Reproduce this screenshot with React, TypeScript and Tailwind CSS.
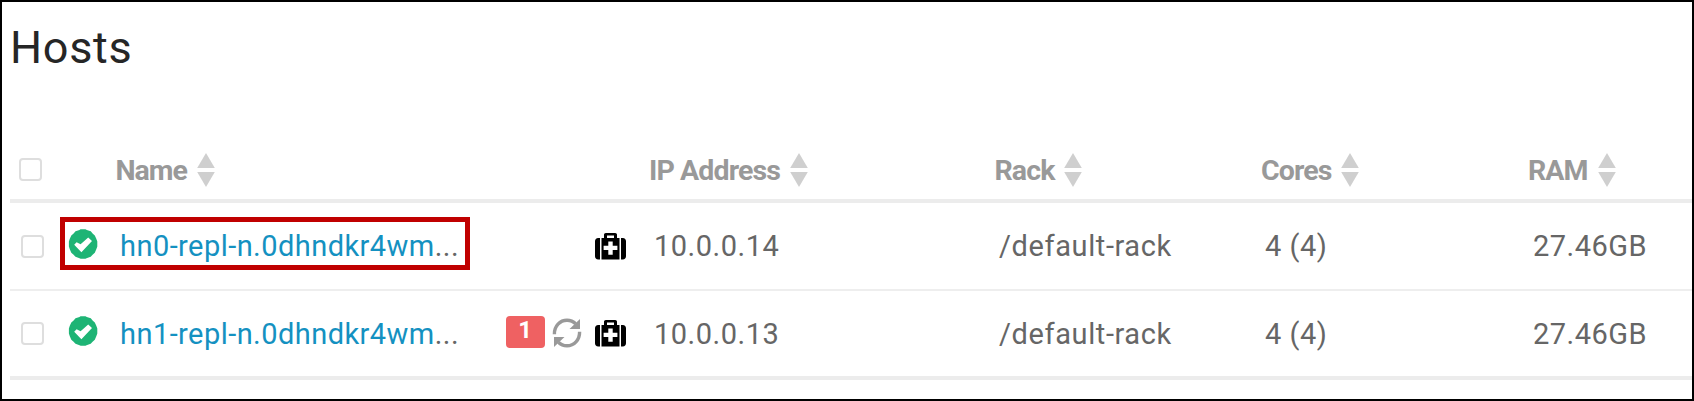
import React from "react";

const columns = [
  { label: "IP Address", cell: "w-[345.5px]" },
  { label: "Rack", cell: "w-[266.5px]" },
  { label: "Cores", cell: "w-[267px]" },
  { label: "RAM", cell: "w-[160px]" },
];

const hosts = [
  { name: "hn0-repl-n.0dhndkr4wm", ip: "10.0.0.14", rack: "/default-rack", cores: "4 (4)", ram: "27.46GB", alerts: 0, selected: true },
  { name: "hn1-repl-n.0dhndkr4wm", ip: "10.0.0.13", rack: "/default-rack", cores: "4 (4)", ram: "27.46GB", alerts: 1, selected: false },
];

function Checkbox() {
  return <span className="block size-[23px] shrink-0 rounded-[4px] border-2 border-[#dedede] bg-white" />;
}

function SortIcon() {
  return (
    <svg className="h-[34px] w-[18px] shrink-0" viewBox="0 0 18 34" fill="#cfcfcf">
      <path d="M9 0 17.8 15H.2Z" />
      <path d="M9 34 17.8 19H.2Z" />
    </svg>
  );
}

function StatusIcon() {
  return (
    <svg className="size-[30px] shrink-0" viewBox="0 0 30 30">
      <path fill="#1eb475" d="M12.5.3h5l1.3.7 4 1.3 1.8 2.100 2.200 2.200 1.500 3.200 1 2.700v5l-1 2.800-1.500 3.400-2.200 2.100-1.900 2-4.200 1.400-1 .6h-4.800l-1.200-.6-4-1.400-1.900-2-2.300-2.100-1.500-3.400-.9-2.800v-5l.9-2.700 1.500-3.200 2.300-2.200 1.900-2.100 4-1.300Z" />
      <path fill="#fff" d="M6.200 15.700 8.600 13.200 12.600 15.200 20.200 8.600 24 12 13.400 23.300Z" />
    </svg>
  );
}

function RefreshIcon() {
  return (
    <svg className="size-[30px] shrink-0" viewBox="0 0 30 30">
      <g fill="none" stroke="#999" strokeWidth="3.4">
        <path d="M2.4 16.2C2.2 8 8 2.2 15 2.2c3.6 0 6.300 1.200 8.600 3.600" />
        <path d="M27.600 13.800C27.800 22 22 27.800 15 27.800c-3.600 0-6.300-1.200-8.600-3.600" />
      </g>
      <path fill="#999" d="M28 1v10H17.500Z" />
      <path fill="#999" d="M2 29V19h10.500Z" />
    </svg>
  );
}

function MedkitIcon() {
  return (
    <svg className="h-[27px] w-[31px] shrink-0" viewBox="0 0 31 27">
      <path fill="#000" d="M5 5v21.500H3.200C1.200 26.500 0 25.200 0 23.300V8.200C0 6.300 1.200 5 3.200 5ZM26 5v21.500h1.800c2 0 3.200-1.300 3.200-3.200V8.200C31 6.300 29.800 5 27.800 5Z" />
      <path fill="#000" fillRule="evenodd" d="M6.500 5h2.500V1.800C9 .7 9.800 0 10.800 0h9.400c1 0 1.800.7 1.800 1.800V5h2.500v21.500h-18ZM12 2.500V5h7V2.500ZM13.300 8.500v4.200H8.600v4.400h4.700v4.700h4.400v-4.700h4.700v-4.400h-4.700V8.500Z" />
    </svg>
  );
}

export default function App() {
  return (
    <main className="flex h-[401px] w-[1694px] flex-col overflow-hidden border-2 border-black bg-white pl-2 font-['Roboto',sans-serif]">
      <h1 className="h-[124px] pt-[18px] text-[45px] leading-[56px] tracking-[0.7px] whitespace-nowrap text-[#262626]">Hosts</h1>

      <div className="flex h-[77px] shrink-0 items-center border-b-4 border-[#ececec] pt-[15px] pb-[1px] text-[28.500px] font-bold text-[#999]">
        <div className="flex w-[105.5px] pl-[9px]">
          <Checkbox />
        </div>
        <div className="flex w-[533.5px] items-center">
          <span className="pt-[3px] tracking-[-1px]">Name</span>
          <span className="ml-[10px] pt-px"><SortIcon /></span>
        </div>
        {columns.map((c) => (
          <div key={c.label} className={`flex shrink-0 items-center whitespace-nowrap ${c.cell}`}>
            <span className="pt-[3px] tracking-[-0.9px]">{c.label}</span>
            <span className="ml-[10px] pt-px"><SortIcon /></span>
          </div>
        ))}
      </div>

      {hosts.map((h) => (
        <div
          key={h.name}
          className={`flex shrink-0 items-center text-[29px] tracking-[0.500px] whitespace-nowrap text-[#666] ${h.selected ? "h-[88px] border-b-2 border-[#eee]" : "h-[89px] border-b-4 border-[#ececec]"}`}
        >
          <div className="flex w-[50px] pl-[11px]">
            <Checkbox />
          </div>
          <div className={`mb-[6px] flex h-[53px] w-[410px] shrink-0 items-center border-[5px] ${h.selected ? "border-[#c00000]" : "border-transparent"}`}>
            <span className="mt-px ml-[2.5px]"><StatusIcon /></span>
            <span className="mt-[8px] ml-[22.5px] tracking-[0.450px] text-[#1491c1]">{h.name}<span className="text-[#666]">...</span></span>
          </div>
          <div className="flex h-[40px] w-[177px] shrink-0 items-center justify-end pr-[21px]">
            {h.alerts > 0 && (
              <>
                <span className="mb-[4px] flex h-[32px] w-[39px] items-center justify-center rounded-[4px] bg-[#ef6162] pb-[4px] text-[24px] font-bold text-white">{h.alerts}</span>
                <span className="mr-[13px] mb-[2px] ml-[7px]"><RefreshIcon /></span>
              </>
            )}
            <MedkitIcon />
          </div>
          <div className="w-[345px] shrink-0 pt-[2px] pl-[7px]">{h.ip}</div>
          <div className="w-[266px] shrink-0 pt-[2px] pl-[7px] tracking-[0.600px]">{h.rack}</div>
          <div className="w-[267px] shrink-0 pt-[2px] pl-[7px]">{h.cores}</div>
          <div className="w-[160px] shrink-0 pt-[2px] pl-[8px]">{h.ram}</div>
        </div>
      ))}
    </main>
  );
}
